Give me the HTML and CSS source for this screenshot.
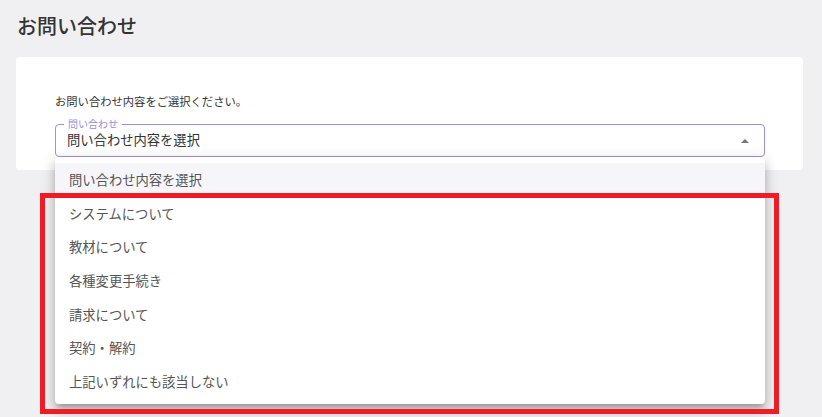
FILE: index.html
```html
<!DOCTYPE html>
<html lang="ja">
<head>
  <meta charset="UTF-8" />
  <meta name="viewport" content="width=device-width, initial-scale=1.0"/>
  <title>お問い合わせ</title>
  <link rel="stylesheet" href="styles.css">
</head>
<body>

<div class="page">
  <h1 class="title">お問い合わせ</h1>

  <div class="card">
    <p class="lead">お問い合わせ内容をご選択ください。</p>

    <div class="field">
      <span class="field-label">問い合わせ</span>
      <span class="field-value">問い合わせ内容を選択</span>
      <span class="arrow"></span>

      <ul class="menu">
        <li class="menu-item selected">問い合わせ内容を選択</li>
        <li class="menu-item">システムについて</li>
        <li class="menu-item">教材について</li>
        <li class="menu-item">各種変更手続き</li>
        <li class="menu-item">請求について</li>
        <li class="menu-item">契約・解約</li>
        <li class="menu-item">上記いずれにも該当しない</li>
      </ul>
    </div>
  </div>
</div>

<div class="highlight"></div>

</body>
</html>
```

FILE: styles.css
```css
html, body {
  min-height: 100%;
}
body {
  margin: 0;
  min-height: 100vh;
  background: #f0f0f3;
  font-family: "Noto Sans CJK JP", "Noto Sans", sans-serif;
  color: #333;
}
.page {
  padding: 12px 19px 0 16px;
}
.title {
  margin: 0 0 17px 1px;
  font-size: 20px;
  font-weight: 500;
  line-height: 28px;
  color: #333;
}
.card {
  background: #fff;
  border-radius: 4px;
  padding: 36px 38px 13px 39px;
}
.lead {
  margin: 0 0 15px;
  font-size: 11.3px;
  line-height: 16px;
  color: #333;
}
.field {
  position: relative;
  height: 31px;
  border: 1px solid #9d8fe0;
  border-radius: 4px;
  display: flex;
  align-items: center;
  padding: 0 11px;
}
.field-label {
  position: absolute;
  top: -7px;
  left: 8px;
  padding: 0 4px;
  background: #fff;
  font-size: 10px;
  line-height: 12px;
  color: #9a8ddc;
}
.field-value {
  flex: 1;
  font-size: 13.3px;
  line-height: 18px;
  margin-top: -1px;
  color: #333;
}
.arrow {
  width: 0;
  height: 0;
  margin-right: 4px;
  margin-top: 1px;
  border-left: 4px solid transparent;
  border-right: 4px solid transparent;
  border-bottom: 4px solid #777;
}
.menu {
  position: absolute;
  z-index: 10;
  top: 32px;
  left: -1px;
  right: -1px;
  margin: 0;
  padding: 6px 0 5px;
  list-style: none;
  background: #fff;
  border-radius: 4px;
  box-shadow: 0 5px 5px -3px rgba(0, 0, 0, 0.2),
              0 8px 10px 1px rgba(0, 0, 0, 0.14),
              0 3px 14px 2px rgba(0, 0, 0, 0.12);
}
.menu-item {
  height: 33.7px;
  line-height: 33.7px;
  padding: 0 14px;
  font-size: 13.3px;
  color: #555;
}
.menu-item.selected {
  background: #f5f5fa;
}
.highlight {
  position: absolute;
  z-index: 20;
  left: 40px;
  top: 193px;
  width: 729px;
  height: 211px;
  border: 5px solid #ee1c27;
}
```
